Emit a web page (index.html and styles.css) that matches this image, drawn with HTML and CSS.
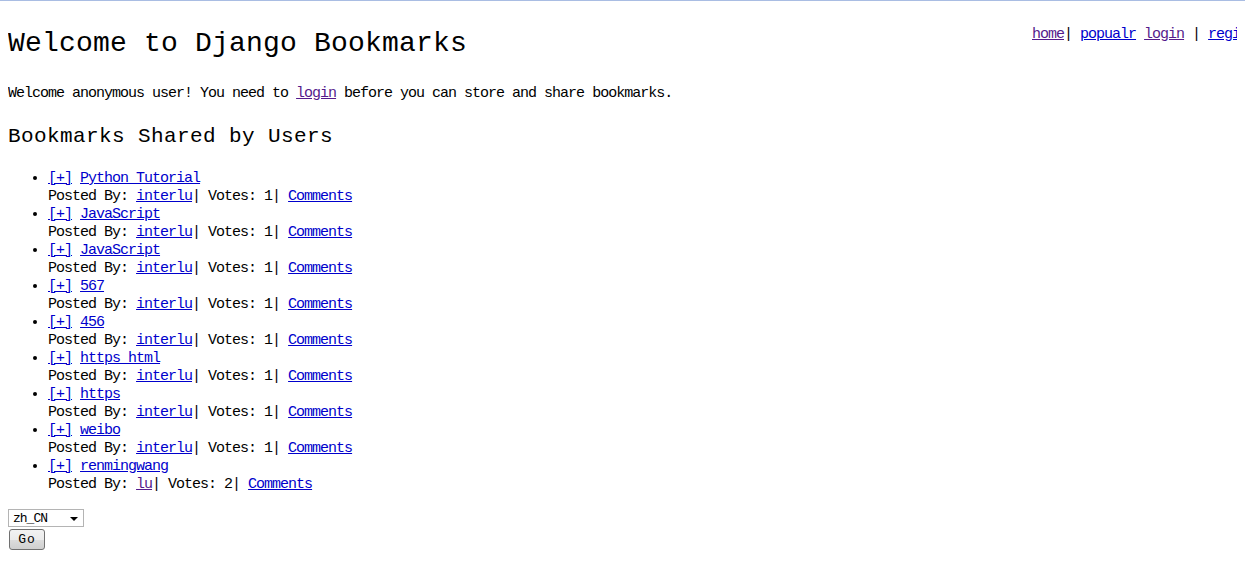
FILE: index.html
```html
<!DOCTYPE html>
<html>
<head>
<meta charset="utf-8">
<title>Django Bookmarks</title>
<link rel="stylesheet" href="styles.css">
</head>
<body>
<div class="nav"><a class="v" href="#">home</a>| <a href="#">popualr</a> <a class="v" href="#">login</a> | <a href="#">register</a></div>
<h1 class="title">Welcome to Django Bookmarks</h1>
<p class="intro">Welcome anonymous user! You need to <a class="v" href="#">login</a> before you can store and share bookmarks.</p>
<h2 class="sub">Bookmarks Shared by Users</h2>
<ul class="bookmarks">
  <li><a href="#">[+]</a> <a href="#">Python Tutorial</a><br>Posted By: <a href="#">interlu</a>| Votes: 1| <a href="#">Comments</a></li>
  <li><a href="#">[+]</a> <a href="#">JavaScript</a><br>Posted By: <a href="#">interlu</a>| Votes: 1| <a href="#">Comments</a></li>
  <li><a href="#">[+]</a> <a href="#">JavaScript</a><br>Posted By: <a href="#">interlu</a>| Votes: 1| <a href="#">Comments</a></li>
  <li><a href="#">[+]</a> <a href="#">567</a><br>Posted By: <a href="#">interlu</a>| Votes: 1| <a href="#">Comments</a></li>
  <li><a href="#">[+]</a> <a href="#">456</a><br>Posted By: <a href="#">interlu</a>| Votes: 1| <a href="#">Comments</a></li>
  <li><a href="#">[+]</a> <a href="#">https_html</a><br>Posted By: <a href="#">interlu</a>| Votes: 1| <a href="#">Comments</a></li>
  <li><a href="#">[+]</a> <a href="#">https</a><br>Posted By: <a href="#">interlu</a>| Votes: 1| <a href="#">Comments</a></li>
  <li><a href="#">[+]</a> <a href="#">weibo</a><br>Posted By: <a href="#">interlu</a>| Votes: 1| <a href="#">Comments</a></li>
  <li><a href="#">[+]</a> <a href="#">renmingwang</a><br>Posted By: <a class="v" href="#">lu</a>| Votes: 2| <a href="#">Comments</a></li>
</ul>
<form class="lang">
  <span class="select-wrap"><select class="lang-select"><option>zh_CN</option><option>en</option></select></span>
  <button type="button" class="go">Go</button>
</form>
</body>
</html>
```

FILE: styles.css
```css
html {
  border-top: 1px solid #a9bde3;
  background: #ffffff;
  overflow: hidden;
}
body {
  margin: 8px;
  font-family: "Liberation Mono", "DejaVu Sans Mono", monospace;
  font-size: 15px;
  letter-spacing: -1px;
  line-height: 18px;
  color: #000;
  position: relative;
}
a { color: #0000cc; text-decoration: underline; }
a.v { color: #551a8b; }

.nav {
  position: absolute;
  left: 1024px;
  top: 17px;
  white-space: nowrap;
  line-height: 18px;
}
.title {
  margin: 17px 0 0;
  font-size: 28px;
  line-height: 36px;
  font-weight: normal;
  letter-spacing: 0.2px;
}
.intro {
  margin: 23px 0 0;
}
.sub {
  margin: 20px 0 0;
  font-size: 21px;
  line-height: 28px;
  font-weight: normal;
  letter-spacing: 0.4px;
}
.bookmarks {
  margin: 19px 0 0;
  padding-left: 40px;
}
.bookmarks li { line-height: 18px; }

.lang {
  margin: 15px 0 0;
  display: flex;
  flex-direction: column;
  align-items: flex-start;
  gap: 1px;
}
.select-wrap {
  position: relative;
  display: block;
}
.select-wrap::after {
  content: "";
  position: absolute;
  right: 6px;
  top: 8px;
  border-left: 4px solid transparent;
  border-right: 4px solid transparent;
  border-top: 4px solid #000;
  pointer-events: none;
}
.lang-select {
  -webkit-appearance: none;
  appearance: none;
  width: 76px;
  height: 18px;
  margin: 0;
  padding: 0 0 0 4px;
  border: 1px solid #b4b4b4;
  border-radius: 0;
  background: #fff;
  font-family: "Liberation Mono", monospace;
  font-size: 13px;
  letter-spacing: -1px;
  color: #000;
}
.go {
  margin: 0 0 0 1px;
  width: 36px;
  height: 21px;
  padding: 0;
  border: 1px solid #707070;
  border-radius: 3px;
  background: linear-gradient(#f2f2f2, #ebebeb 50%, #dddddd 51%, #cfcfcf);
  font-family: "Liberation Mono", monospace;
  font-size: 13px;
  letter-spacing: 1px;
  color: #000;
}
```
